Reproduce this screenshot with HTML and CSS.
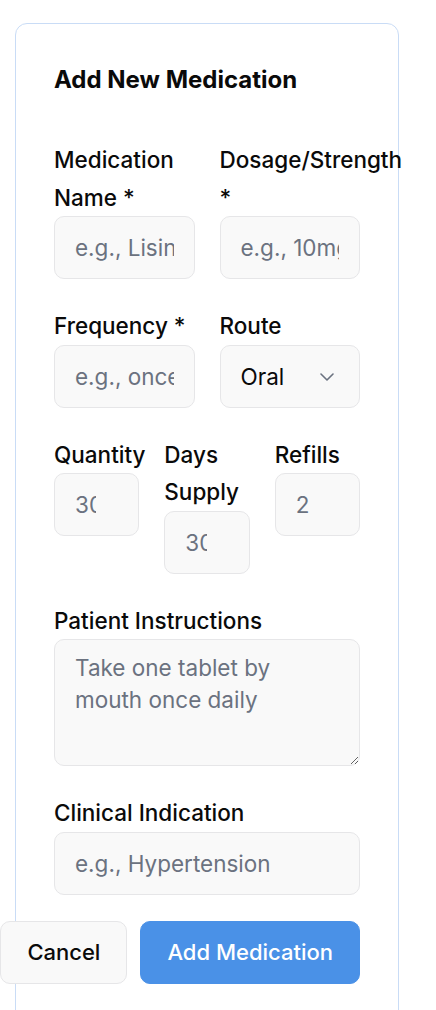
FILE: index.html
```html
<!DOCTYPE html>
<html lang="en">
<head>
<meta charset="utf-8">
<title>Add New Medication</title>
<link rel="stylesheet" href="styles.css">
</head>
<body>
<div class="card">
  <h2 class="title">Add New Medication</h2>
  <form class="form">
    <div class="row cols-2">
      <div class="field">
        <label class="label" for="name">Medication Name *</label>
        <input class="input" id="name" type="text" placeholder="e.g., Lisinopril">
      </div>
      <div class="field">
        <label class="label" for="dose">Dosage/Strength *</label>
        <input class="input" id="dose" type="text" placeholder="e.g., 10mg">
      </div>
    </div>
    <div class="row cols-2">
      <div class="field">
        <label class="label" for="freq">Frequency *</label>
        <input class="input" id="freq" type="text" placeholder="e.g., once daily">
      </div>
      <div class="field">
        <label class="label" for="route">Route</label>
        <div class="select-wrap">
          <select class="input select" id="route">
            <option>Oral</option>
            <option>Topical</option>
            <option>Injection</option>
          </select>
          <svg class="chevron" width="14" height="8" viewBox="0 0 14 8" aria-hidden="true"><path d="M1 1l6 6 6-6" fill="none" stroke="#6b7280" stroke-width="1.6" stroke-linecap="round" stroke-linejoin="round"/></svg>
        </div>
      </div>
    </div>
    <div class="row cols-3">
      <div class="field">
        <label class="label" for="qty">Quantity</label>
        <input class="input number" id="qty" type="number" placeholder="30">
      </div>
      <div class="field">
        <label class="label" for="days">Days Supply</label>
        <input class="input number" id="days" type="number" placeholder="30">
      </div>
      <div class="field">
        <label class="label" for="refills">Refills</label>
        <input class="input number" id="refills" type="number" placeholder="2">
      </div>
    </div>
    <div class="field">
      <label class="label" for="instr">Patient Instructions</label>
      <textarea class="input textarea" id="instr" placeholder="Take one tablet by mouth once daily"></textarea>
    </div>
    <div class="field">
      <label class="label" for="ind">Clinical Indication</label>
      <input class="input" id="ind" type="text" placeholder="e.g., Hypertension">
    </div>
    <div class="actions">
      <button type="button" class="btn btn-cancel">Cancel</button>
      <button type="button" class="btn btn-primary">Add Medication</button>
    </div>
  </form>
</div>
</body>
</html>
```

FILE: styles.css
```css
* { box-sizing: border-box; }

html, body {
  margin: 0;
  padding: 0;
  background: #ffffff;
}

body {
  font-family: Inter, "Liberation Sans", sans-serif;
  color: #0a0a0a;
}

.card {
  width: 384px;
  margin: 23px 0 0 15px;
  padding: 41px 38px 38px 38px;
  border: 1px solid #c9dcf6;
  border-radius: 12px;
  background: #ffffff;
}

.title {
  margin: 0 0 46px 0;
  font-size: 24px;
  line-height: 30px;
  font-weight: 700;
  color: #0a0a0a;
}

.form {
  display: flex;
  flex-direction: column;
  gap: 28px;
  margin: 0;
}

.row {
  display: grid;
  column-gap: 25px;
  align-items: start;
}

.cols-2 { grid-template-columns: 1fr 1fr; }
.cols-3 { grid-template-columns: 1fr 1fr 1fr; }

.field {
  display: flex;
  flex-direction: column;
  min-width: 0;
}

.label {
  display: block;
  font-size: 22.5px;
  line-height: 37.5px;
  font-weight: 500;
  color: #0a0a0a;
}

.input {
  display: block;
  width: 100%;
  min-width: 0;
  height: 63px;
  margin: 0;
  padding: 0 20px;
  border: 1px solid #e6e6e8;
  border-radius: 10px;
  background: #f9f9f9;
  font-family: Inter, "Liberation Sans", sans-serif;
  font-size: 22.5px;
  color: #0a0a0a;
  outline: none;
}

.input::placeholder {
  color: #6b7280;
  opacity: 1;
}

.number {
  padding-right: 42px;
  -moz-appearance: textfield;
}

.number::-webkit-inner-spin-button,
.number::-webkit-outer-spin-button {
  -webkit-appearance: none;
  margin: 0;
}

.select-wrap {
  position: relative;
}

.select {
  appearance: none;
  -webkit-appearance: none;
}

.chevron {
  position: absolute;
  right: 26px;
  top: 28px;
  pointer-events: none;
}

.textarea {
  height: 127px;
  padding: 12px 26px 12px 20px;
  line-height: 32px;
  resize: vertical;
}

.actions {
  display: flex;
  justify-content: flex-end;
  gap: 13px;
  margin-top: -2px;
}

.btn {
  flex-shrink: 0;
  height: 63px;
  padding: 0 26px;
  border-radius: 10px;
  font-family: Inter, "Liberation Sans", sans-serif;
  font-size: 22px;
  font-weight: 500;
  white-space: nowrap;
  cursor: pointer;
}

.btn-cancel {
  background: #f9f9f9;
  border: 1px solid #e6e6e8;
  color: #0a0a0a;
}

.btn-primary {
  background: #4a91e7;
  border: 1px solid #4a91e7;
  color: #ffffff;
}
```
